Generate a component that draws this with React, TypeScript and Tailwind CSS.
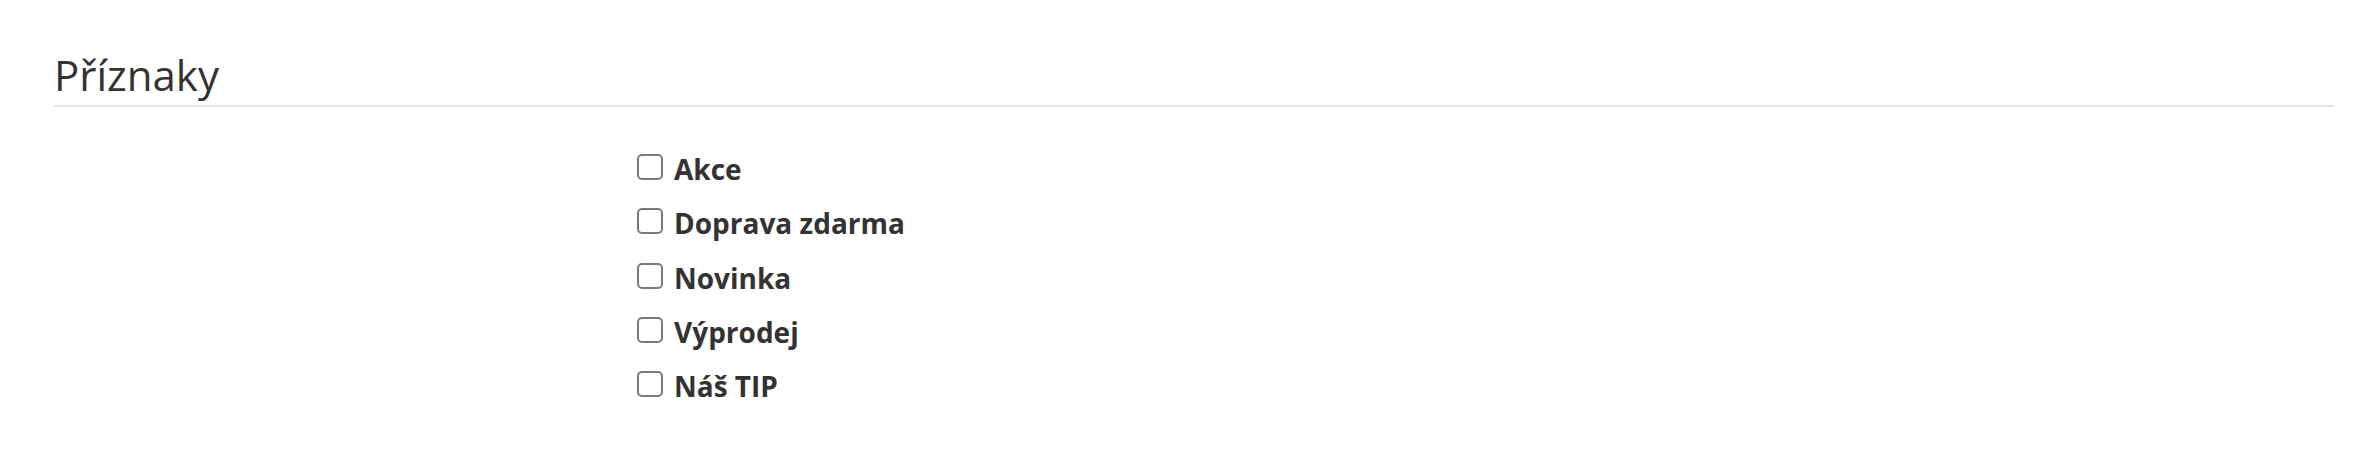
import { useState } from 'react'

const FLAGS = ['Akce', 'Doprava zdarma', 'Novinka', 'Výprodej', 'Náš TIP']

export default function App() {
  const [checked, setChecked] = useState<Record<string, boolean>>({})

  return (
    <div className="min-h-[466px] w-full bg-white px-[54px] pt-[50px] pr-[44px] font-['Open_Sans',sans-serif] text-[#333333]">
      <h2 className="border-b-2 border-[#e5e5e5] pb-[5px] text-[42px] font-normal leading-[50px]">Příznaky</h2>

      <div className="mt-[44px] grid grid-cols-[583px_1fr]">
        <div />
        <div className="flex flex-col gap-[18.25px]">
          {FLAGS.map((flag) => (
            <label key={flag} className="flex h-[36px] cursor-pointer items-start gap-[11px]">
              <input
                type="checkbox"
                checked={!!checked[flag]}
                onChange={(e) => setChecked({ ...checked, [flag]: e.target.checked })}
                className="mt-[3px] h-[26px] w-[26px] shrink-0 cursor-pointer appearance-none rounded-[5px] border-2 border-[#7a7a7a] bg-white checked:bg-[#0075ff]"
              />
              <span className="text-[28px] font-bold leading-[36px]">{flag}</span>
            </label>
          ))}
        </div>
      </div>
    </div>
  )
}
